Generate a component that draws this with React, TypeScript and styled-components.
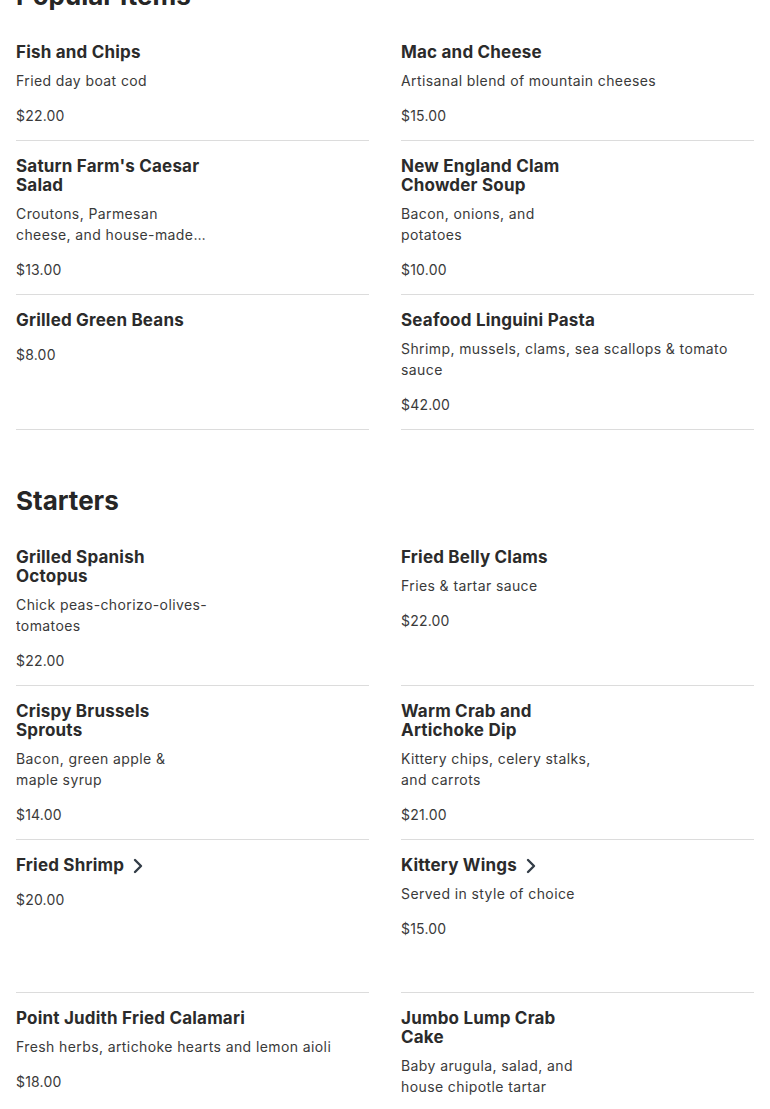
import React from 'react'
import styled, { createGlobalStyle } from 'styled-components'

const GlobalStyle = createGlobalStyle`
  body {
    margin: 0;
    background: #ffffff;
    color: #2b2b2b;
    font-family: Inter, "Open Sans", sans-serif;
  }
`

interface MenuItem {
  name: string
  description?: string
  price: string
  hasImage?: boolean
  hasOptions?: boolean
}

interface MenuSection {
  title: string
  items: MenuItem[]
}

const sections: MenuSection[] = [
  {
    title: 'Popular Items',
    items: [
      { name: 'Fish and Chips', description: 'Fried day boat cod', price: '$22.00' },
      { name: 'Mac and Cheese', description: 'Artisanal blend of mountain cheeses', price: '$15.00' },
      {
        name: "Saturn Farm's Caesar Salad",
        description: 'Croutons, Parmesan cheese, and house-made Caesar dressing',
        price: '$13.00',
        hasImage: true
      },
      {
        name: 'New England Clam Chowder Soup',
        description: 'Bacon, onions, and potatoes',
        price: '$10.00',
        hasImage: true
      },
      { name: 'Grilled Green Beans', price: '$8.00' },
      {
        name: 'Seafood Linguini Pasta',
        description: 'Shrimp, mussels, clams, sea scallops & tomato sauce',
        price: '$42.00'
      }
    ]
  },
  {
    title: 'Starters',
    items: [
      {
        name: 'Grilled Spanish Octopus',
        description: 'Chick peas-chorizo-olives-tomatoes',
        price: '$22.00',
        hasImage: true
      },
      { name: 'Fried Belly Clams', description: 'Fries & tartar sauce', price: '$22.00' },
      {
        name: 'Crispy Brussels Sprouts',
        description: 'Bacon, green apple & maple syrup',
        price: '$14.00',
        hasImage: true
      },
      {
        name: 'Warm Crab and Artichoke Dip',
        description: 'Kittery chips, celery stalks, and carrots',
        price: '$21.00',
        hasImage: true
      },
      { name: 'Fried Shrimp', price: '$20.00', hasImage: true, hasOptions: true },
      {
        name: 'Kittery Wings',
        description: 'Served in style of choice',
        price: '$15.00',
        hasImage: true,
        hasOptions: true
      },
      {
        name: 'Point Judith Fried Calamari',
        description: 'Fresh herbs, artichoke hearts and lemon aioli',
        price: '$18.00'
      },
      {
        name: 'Jumbo Lump Crab Cake',
        description: 'Baby arugula, salad, and house chipotle tartar',
        price: '$24.00',
        hasImage: true
      }
    ]
  }
]

const Page = styled.main`
  padding: 0 16px;
`

const Section = styled.section`
  & + & {
    margin-top: 55px;
  }

  &:first-child {
    margin-top: -20px;
  }
`

const SectionTitle = styled.h2`
  margin: 0 0 15px;
  font-size: 26px;
  line-height: 32px;
  font-weight: 700;
  color: #262626;
`

const ItemGrid = styled.div`
  display: grid;
  grid-template-columns: 1fr 1fr;
  column-gap: 32px;
`

const ItemCard = styled.div`
  display: flex;
  gap: 16px;
  padding: 16px 0 14px;
  border-bottom: 1px solid #dcdcdc;
`

const ItemText = styled.div<{ $narrow: boolean }>`
  flex: ${p => (p.$narrow ? '0 0 192px' : '1 1 auto')};
  min-width: 0;
`

const ItemName = styled.h3`
  display: flex;
  align-items: center;
  gap: 9px;
  margin: 0;
  font-size: 17px;
  line-height: 19px;
  font-weight: 700;
  letter-spacing: 0.2px;
  color: #2b2b2b;
`

const Chevron = styled.svg`
  flex: none;
  width: 10px;
  height: 16px;
`

const ItemDescription = styled.p`
  margin: 8px 0 0;
  font-size: 14px;
  line-height: 21px;
  letter-spacing: 0.4px;
  color: #3a3a3a;
  display: -webkit-box;
  -webkit-line-clamp: 2;
  -webkit-box-orient: vertical;
  overflow: hidden;
`

const ItemPrice = styled.div`
  margin-top: 14px;
  font-size: 14px;
  line-height: 21px;
  letter-spacing: 0.2px;
  color: #3a3a3a;
`

const ItemImage = styled.div`
  flex: none;
  width: 145px;
  height: 122px;
`

const MenuCard = ({ item }: { item: MenuItem }) => (
  <ItemCard>
    <ItemText $narrow={!!item.hasImage}>
      <ItemName>
        <span>{item.name}</span>
        {item.hasOptions && (
          <Chevron viewBox='0 0 10 16' fill='none'>
            <path
              d='M2 2l6 6-6 6'
              stroke='#333d47'
              strokeWidth='2.4'
              strokeLinecap='round'
              strokeLinejoin='round'
            />
          </Chevron>
        )}
      </ItemName>
      {item.description && <ItemDescription>{item.description}</ItemDescription>}
      <ItemPrice>{item.price}</ItemPrice>
    </ItemText>
    {item.hasImage && <ItemImage />}
  </ItemCard>
)

export default function App () {
  return (
    <>
      <GlobalStyle />
      <Page>
        {sections.map(section => (
          <Section key={section.title}>
            <SectionTitle>{section.title}</SectionTitle>
            <ItemGrid>
              {section.items.map(item => (
                <MenuCard key={item.name} item={item} />
              ))}
            </ItemGrid>
          </Section>
        ))}
      </Page>
    </>
  )
}
